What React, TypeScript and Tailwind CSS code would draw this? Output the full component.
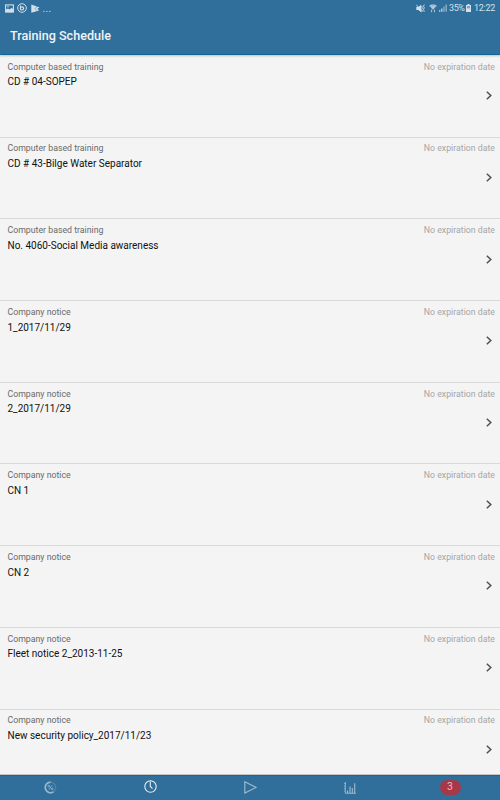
import React from "react";

interface TrainingItem {
  category: string;
  title: string;
}

const items: TrainingItem[] = [
  { category: "Computer based training", title: "CD # 04-SOPEP" },
  { category: "Computer based training", title: "CD # 43-Bilge Water Separator" },
  { category: "Computer based training", title: "No. 4060-Social Media awareness" },
  { category: "Company notice", title: "1_2017/11/29" },
  { category: "Company notice", title: "2_2017/11/29" },
  { category: "Company notice", title: "CN 1" },
  { category: "Company notice", title: "CN 2" },
  { category: "Company notice", title: "Fleet notice 2_2013-11-25" },
  { category: "Company notice", title: "New security policy_2017/11/23" },
];

const StatusBar: React.FC = () => (
  <div className="flex h-4 items-center justify-between pl-[4.5px] pr-[5px] text-[#d3e0e9]">
    <div className="flex items-center">
      {/* Screenshot */}
      <svg className="h-[9px] w-[9px]" viewBox="0 0 9 9" fill="none" stroke="currentColor">
        <rect x="0.6" y="0.9" width="7.8" height="7.2" strokeWidth="1.1" />
        <path d="M1 8V5.6l2-1.2 1.5 1L6.4 4 8 4.8V8z" fill="currentColor" stroke="none" />
        <path d="M2 2.8h2" strokeWidth="0.8" />
      </svg>
      {/* Circled app icon */}
      <svg className="ml-[3.5px] h-[10px] w-[10px]" viewBox="0 0 10 10" fill="none" stroke="currentColor">
        <circle cx="5" cy="5" r="4.3" strokeWidth="1" />
        <circle cx="5" cy="5.4" r="1.6" strokeWidth="1.2" />
        <path d="M3.4 2.4v3" strokeWidth="1" />
      </svg>
      {/* Play store */}
      <svg className="ml-[3.5px] h-[9px] w-[9px]" viewBox="0 0 9 9">
        <path d="M0.3 0.4L8.6 3.4 6.4 4.8 8.2 6.4 0.3 8.7z" fill="currentColor" />
        <path d="M3.8 4.4L6 6.6M4.2 4.3l2.2-2" stroke="#306f9b" strokeWidth="0.5" />
      </svg>
      <span className="ml-[3px] mt-[2px] text-[10px] leading-4 tracking-[0.4px]">...</span>
    </div>

    <div className="flex items-center text-[9px] leading-4">
      {/* Muted, vibrate */}
      <svg className="h-[9px] w-[9px]" viewBox="0 0 9 9" fill="none" stroke="currentColor">
        <path d="M0.3 3h2L5.2 0.8v7.4L2.3 6h-2z" fill="currentColor" stroke="none" />
        <path d="M0.3 0.8l6 7.2" strokeWidth="0.9" />
        <path d="M6.4 1.8l-.8 1.2 1 1.2-1 1.2.8 1.8M8.3 0.6l-.8 1.6.8 1.6-.8 1.6.8 2.4" strokeWidth="0.9" />
      </svg>
      {/* Wifi */}
      <svg className="ml-[4px] h-[9px] w-[8px]" viewBox="0 0 8 9" fill="none" stroke="currentColor">
        <path d="M0.5 2.4Q4-.3 7.5 2.4" strokeWidth="1.1" />
        <path d="M1.2 2.8Q4 .9 6.8 2.8L4 5.8z" fill="currentColor" stroke="none" opacity="0.8" />
        <path d="M2.6 5.6v2.6M5.4 8.2V5.6" strokeWidth="0.8" />
      </svg>
      {/* Signal */}
      <svg className="ml-[2px] h-[8px] w-[8px]" viewBox="0 0 8 8" stroke="currentColor" strokeWidth="1.2">
        <path d="M0.7 7.8V6.2M2.8 7.8V4.6" />
        <path d="M5 7.8V2.6M7.2 7.8V0.4" opacity="0.65" />
      </svg>
      <span className="ml-[2px] w-[16px] whitespace-nowrap text-[9px] tracking-[-0.4px]">35%</span>
      {/* Battery */}
      <svg className="ml-[1px] h-[8px] w-[5px]" viewBox="0 0 5 8">
        <path d="M1.5 0h2v1H5v7H0V1h1.5z" fill="currentColor" />
        <path d="M1 2h3v2.4H1z" fill="#7da4bf" />
      </svg>
      <span className="ml-[3px] w-[21px] whitespace-nowrap text-[9px] tracking-[-0.3px]">12:22</span>
    </div>
  </div>
);

const ScheduleRow: React.FC<{ item: TrainingItem }> = ({ item }) => (
  <li className="flex h-[81.7px] shrink-0 flex-col border-b border-[#d9d9d9] pl-[7.5px] pr-[5px] pt-[4.8px]">
    <div className="flex justify-between text-[8.75px] leading-3">
      <span className="text-[#6a6a6a]">{item.category}</span>
      <span className="text-[#a6a6a6]">No expiration date</span>
    </div>
    <p className="mt-[3.7px] text-[10px] leading-3 text-[#111111]">{item.title}</p>
    <svg className="mr-[3px] mt-[2.8px] h-[9px] w-[6px] self-end" viewBox="0 0 6 9" fill="none" stroke="#505050" strokeWidth="1.5">
      <path d="M0.8 0.8L4.8 4.5 0.8 8.2" />
    </svg>
  </li>
);

const BottomNav: React.FC = () => (
  <nav className="z-10 grid h-[25px] shrink-0 grid-cols-5 items-center justify-items-center border-t border-[#10679c] bg-[#306f9b] pb-px shadow-[0_-1px_0_#c6c6c6]">
    {/* Progress */}
    <svg className="h-[13px] w-[13px]" viewBox="0 0 13 13" fill="none" stroke="#9bb9cd">
      <circle cx="6.5" cy="6.5" r="5.2" stroke="#4d84a9" strokeWidth="1.4" />
      <path d="M6.5 1.1A5.3 5.3 0 1 0 9.5 10.8" strokeWidth="1.6" />
      <path d="M8 4.2L5 8.8" strokeWidth="0.8" />
      <circle cx="4.8" cy="5.2" r="0.9" strokeWidth="0.8" />
      <circle cx="8.2" cy="7.8" r="0.9" strokeWidth="0.8" />
    </svg>
    {/* Schedule */}
    <svg className="mb-[3px] h-[13px] w-[13px]" viewBox="0 0 13 13" fill="none" stroke="#e6eef3">
      <circle cx="6.5" cy="6.5" r="5.7" strokeWidth="1.1" />
      <path d="M6.3 1.5v5l2.2 2.2" strokeWidth="1.1" />
    </svg>
    {/* Play */}
    <svg className="h-[13px] w-[13px]" viewBox="0 0 13 13" fill="none" stroke="#a0bdd0">
      <path d="M0.8 0.8L12.2 6.4 0.8 12z" strokeWidth="1.1" />
    </svg>
    {/* Statistics */}
    <svg className="h-[12px] w-[12px]" viewBox="0 0 12 12" fill="none" stroke="#a0bdd0">
      <path d="M1.3 0v11.3H12" strokeWidth="0.9" />
      <path d="M0 1.5h1.3M0 4h1.3M0 6.5h1.3M0 9h1.3" strokeWidth="0.7" />
      <path d="M3.6 11V8.5M6 11V4.5M8.3 11V6M10.7 11V1.2" strokeWidth="1.1" />
    </svg>
    {/* Pending count */}
    <span className="flex h-[15px] w-[21px] items-center justify-center rounded-full bg-[#a83748] text-[10.5px] leading-none text-[#dfbdc5]">
      3
    </span>
  </nav>
);

const App: React.FC = () => {
  return (
    <div className="flex h-[800px] w-[500px] flex-col overflow-hidden bg-[#f4f4f4] font-['Roboto',sans-serif]">
      <header className="z-10 h-[55px] shrink-0 border-b border-[#10679c] bg-[#306f9b] shadow-[0_1px_2px_#bdbdbd]">
        <StatusBar />
        <h1 className="pl-[10px] pt-[12px] text-[12.6px] font-medium leading-4 text-[#eff5f8]">Training Schedule</h1>
      </header>
      <ul className="min-h-0 flex-1 overflow-hidden pt-[1px]">
        {items.map((item, index) => (
          <ScheduleRow key={index} item={item} />
        ))}
      </ul>
      <BottomNav />
    </div>
  );
};

export default App;
